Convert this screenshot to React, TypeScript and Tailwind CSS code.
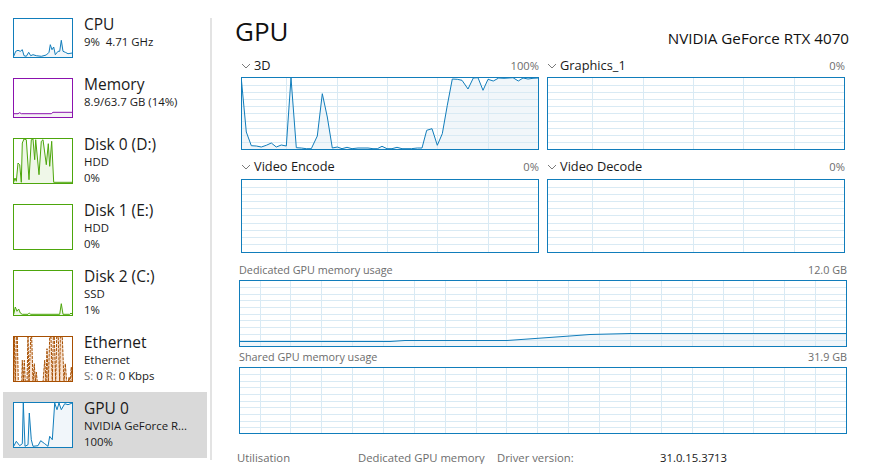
import React from "react";

type P = [number, number];
const z = (pts: P[], x0: number, y0: number, s = 3): P[] => pts.map(([x, y]) => [(x - x0) / s, (y - y0) / s]);

function Chart({ w, h, pts, color, fill, vl = [], hl = [], dashed, sw = 1 }: { w: number; h: number; pts?: P[]; color: string; fill: string; vl?: number[]; hl?: number[]; dashed?: boolean; sw?: number }) {
  const line = pts ? pts.map((p) => p[0].toFixed(1) + "," + p[1].toFixed(1)).join(" ") : "";
  const area = pts ? `0,${h} ${line} ${w},${h}` : "";
  return (
    <svg width={w} height={h} viewBox={`0 0 ${w} ${h}`} className="block">
      {pts && <polygon points={area} fill={fill} />}
      {vl.map((x) => (
        <line key={"v" + x} x1={x + 0.5} x2={x + 0.5} y1={0} y2={h} stroke="#d9eaf4" strokeWidth={1} />
      ))}
      {hl.map((y) => (
        <line key={"h" + y} x1={0} x2={w} y1={y + 0.5} y2={y + 0.5} stroke="#d9eaf4" strokeWidth={1} />
      ))}
      {pts && <polyline points={line} fill="none" stroke={color} strokeWidth={sw} strokeDasharray={dashed ? "3 1" : undefined} />}
    </svg>
  );
}

const cpu = z([[42,170],[48,155],[55,152],[62,155],[68,150],[73,168],[80,170],[87,158],[93,168],[100,165],[110,168],[125,170],[140,166],[148,158],[152,135],[157,150],[162,142],[167,165],[175,155],[180,155],[185,122],[190,155],[197,158],[205,162],[218,160]], 43, 58);
const mem = z([[42,342],[55,342],[60,339],[65,342],[155,342],[160,338],[218,338]], 43, 238);
const d0 = z([[42,548],[46,535],[50,545],[55,490],[60,495],[65,548],[68,430],[73,418],[80,420],[88,540],[95,420],[100,418],[105,480],[108,420],[118,525],[125,425],[130,420],[140,495],[146,432],[150,500],[156,425],[162,548],[218,548]], 43, 418);
const d2 = z([[42,224],[47,202],[52,215],[57,208],[62,220],[68,224],[85,224],[89,220],[93,224],[180,224],[185,192],[190,224],[210,224],[214,220],[218,224]], 43, 94);
const ethPts = z([[12,150],[14,15],[17,150],[20,15],[23,15],[26,150],[30,150],[36,150],[38,85],[41,150],[44,85],[47,150],[52,150],[55,15],[58,150],[63,15],[66,15],[70,150],[74,95],[77,150],[80,120],[83,150],[100,150],[105,85],[109,150],[112,50],[116,150],[120,15],[124,15],[128,150],[131,15],[134,15],[138,150],[141,15],[146,15],[150,150],[152,15],[158,15],[163,150],[167,95],[171,150],[176,150],[178,135],[181,150],[185,105],[188,150]], 13, 15);
const gpuT = z([[42,620],[50,605],[60,618],[68,612],[71,490],[76,620],[85,615],[89,520],[95,600],[100,620],[115,618],[123,603],[135,612],[145,620],[150,590],[158,600],[165,490],[172,510],[178,490],[185,510],[195,492],[205,495],[218,490]], 43, 490);
const gpu3d = z([[50,90],[65,250],[80,291],[95,292],[110,295],[125,290],[140,283],[155,295],[170,289],[185,292],[199,88],[215,297],[230,298],[245,300],[260,300],[278,262],[293,135],[308,205],[323,298],[338,295],[352,300],[367,296],[382,300],[400,298],[430,298],[445,300],[458,300],[472,293],[487,300],[502,300],[517,296],[532,300],[560,300],[578,298],[592,298],[606,245],[622,240],[638,290],[653,255],[668,170],[683,91],[698,92],[712,95],[730,121],[746,88],[760,87],[775,125],[790,92],[806,97],[822,88],[838,89],[865,87],[881,97],[895,88],[910,91],[925,89],[941,88]], 52, 88);
const dedicated: P[] = [[0,60.5],[150,60.5],[165,59.5],[267,59.5],[330,55],[350,53.5],[390,52.5],[400,52.5],[606,52.5]];

const smallV = [44, 95, 145, 195, 246];
const smallH = [7, 14, 21, 28, 35, 43, 50, 57, 64];
const bigV = [20, 50, 81, 112, 143, 174, 205, 236, 266, 297, 328, 359, 390, 421, 452, 483, 513, 544, 575];
const bigH = [6, 13, 19, 26, 33, 39, 46, 53, 59];

const rows = [
  { t: "CPU", l: ["9%  4.71 GHz"], h: 60, bh: 40, c: "#117dbb", f: "#f1f6fa", pts: cpu, cls: "border-[#117dbb]" },
  { t: "Memory", l: ["8.9/63.7 GB (14%)"], h: 60, bh: 40, c: "#8b12ae", f: "#f4f2f4", pts: mem, cls: "border-[#8b12ae]" },
  { t: "Disk 0 (D:)", l: ["HDD", "0%"], h: 66, bh: 46, c: "#4da60c", f: "#eff7e8", pts: d0, cls: "border-[#4da60c]" },
  { t: "Disk 1 (E:)", l: ["HDD", "0%"], h: 66, bh: 46, c: "#4da60c", f: "#eff7e8", cls: "border-[#4da60c]" },
  { t: "Disk 2 (C:)", l: ["SSD", "1%"], h: 66, bh: 46, c: "#4da60c", f: "#eff7e8", pts: d2, cls: "border-[#4da60c]" },
  { t: "Ethernet", l: ["Ethernet"], h: 66, bh: 46, c: "#a74f01", f: "#f8e2d0", pts: ethPts, cls: "border-[#a74f01]", eth: true, dashed: true },
  { t: "GPU 0", l: ["NVIDIA GeForce R...", "100%"], h: 66, bh: 46, c: "#117dbb", f: "#f1f6fa", pts: gpuT, cls: "border-[#117dbb]", sel: true },
];

function Row({ r }: { r: (typeof rows)[number] }) {
  return (
    <div className={`flex pt-2.5 pl-2.5 gap-[11px] ${r.sel ? "bg-[#d9d9d9]" : ""}`} style={{ height: r.h }}>
      <div className={`w-[60px] border ${r.cls} shrink-0 overflow-hidden ${r.sel ? "bg-white" : ""}`} style={{ height: r.bh }}>
        <Chart w={58} h={r.bh - 2} pts={r.pts} color={r.c} fill={r.f} dashed={(r as any).dashed} />
      </div>
      <div className="-mt-[4px] min-w-0">
        <div className="text-[15.5px] leading-[20px] text-[#1a1a1a]">{r.t}</div>
        {r.l.map((x) => (
          <div key={x} className="text-[11.4px] leading-[16px] text-[#1a1a1a] whitespace-pre">{x}</div>
        ))}
        {(r as any).eth && (
          <div className="text-[11.4px] leading-[16px] text-[#1a1a1a] whitespace-pre">
            <span className="text-[#6d6d6d]">S:</span> 0 <span className="text-[#6d6d6d]">R:</span> 0 Kbps
          </div>
        )}
      </div>
    </div>
  );
}

function Chevron() {
  return (
    <svg width="10" height="6" viewBox="0 0 10 6" className="shrink-0">
      <path d="M1 1l4 4 4-4" fill="none" stroke="#7a7a7a" strokeWidth="1" />
    </svg>
  );
}

function SmallGraph({ title, val, pts, h, low }: { title: string; val: string; pts?: P[]; h: number; low?: boolean }) {
  return (
    <div className="w-[298px]">
      <div className={`flex items-center ${low ? "h-[23px] pb-[1px]" : "h-[22px]"}`}>
        <Chevron />
        <span className="ml-[3px] text-[12.8px] text-[#1a1a1a]">{title}</span>
        <span className="ml-auto text-[11.2px] text-[#6d6d6d]">{val}</span>
      </div>
      <div className="border border-[#117dbb] overflow-hidden" style={{ height: h }}>
        <Chart w={296} h={h - 2} pts={pts} color="#117dbb" fill="#f1f6fa" vl={smallV} hl={smallH} />
      </div>
    </div>
  );
}

function BigGraph({ title, val, pts }: { title: string; val: string; pts?: P[] }) {
  return (
    <div className="w-[608px]">
      <div className="flex items-center justify-between h-[20px] text-[10.8px] text-[#6d6d6d]">
        <span>{title}</span>
        <span>{val}</span>
      </div>
      <div className="h-[67px] border border-[#117dbb] overflow-hidden">
        <Chart w={606} h={65} pts={pts} color="#117dbb" fill="#f1f6fa" vl={bigV} hl={bigH} />
      </div>
    </div>
  );
}

export default function App() {
  return (
    <div className="w-[869px] h-[471px] bg-white overflow-hidden flex font-['Open_Sans','Noto_Sans',sans-serif]">
      <div className="w-[204px] ml-[3px] pt-2 shrink-0 flex flex-col">
        {rows.map((r) => (
          <Row key={r.t} r={r} />
        ))}
      </div>
      <div className="w-[2px] ml-[3px] mt-[18px] h-[442px] bg-[#e3e3e3] shrink-0" />
      <div className="flex-1 min-w-0 flex flex-col pl-[29px] pr-[24px]">
        <div className="flex items-end justify-between h-[48px]">
          <span className="-ml-[6px] text-[26px] leading-[32px] text-[#111] mb-[1px]">GPU</span>
          <span className="text-[15.2px] leading-[20px] text-[#111] -mr-[4px]">NVIDIA GeForce RTX 4070</span>
        </div>
        <div className="flex gap-2 mt-[7px]">
          <SmallGraph title="3D" val="100%" pts={gpu3d} h={73} />
          <SmallGraph title="Graphics_1" val="0%" h={73} />
        </div>
        <div className="flex gap-2 mt-[6px]">
          <SmallGraph title="Video Encode" val="0%" h={74} low />
          <SmallGraph title="Video Decode" val="0%" h={74} low />
        </div>
        <div className="-ml-[2px] mt-[7px]">
          <BigGraph title="Dedicated GPU memory usage" val="12.0 GB" pts={dedicated} />
        </div>
        <div className="-ml-[2px]">
          <BigGraph title="Shared GPU memory usage" val="31.9 GB" />
        </div>
        <div className="flex -ml-[4px] mt-[16px] h-[14px] overflow-hidden text-[11.3px] leading-[16px] text-[#6d6d6d] items-start">
          <span className="w-[121px]">Utilisation</span>
          <span className="w-[139px]">Dedicated GPU memory</span>
          <span className="w-[163px]">Driver version:</span>
          <span className="text-[#1a1a1a]">31.0.15.3713</span>
        </div>
      </div>
    </div>
  );
}
